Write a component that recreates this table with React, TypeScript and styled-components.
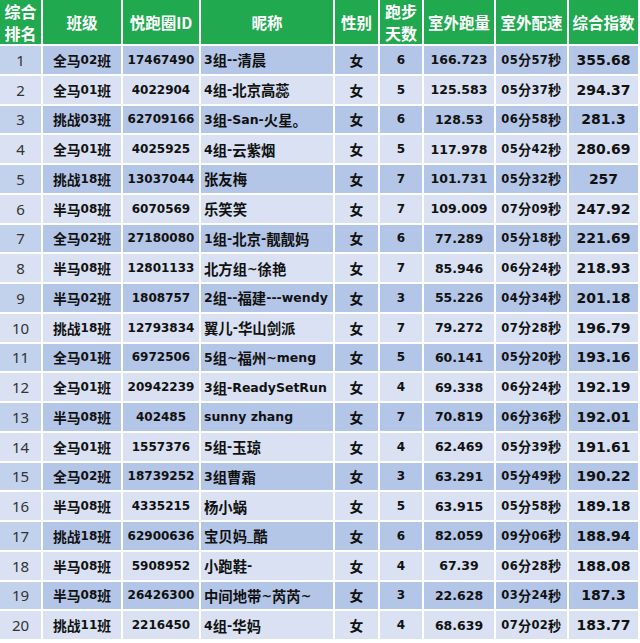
import styled, { createGlobalStyle } from "styled-components";

type Record = {
  rank: number;
  team: string;
  id: string;
  nick: string;
  gender: string;
  days: number;
  distance: string;
  pace: string;
  score: string;
};

const rows: Record[] = [
  { rank: 1, team: "全马02班", id: "17467490", nick: "3组--清晨", gender: "女", days: 6, distance: "166.723", pace: "05分57秒", score: "355.68" },
  { rank: 2, team: "全马01班", id: "4022904", nick: "4组-北京高蕊", gender: "女", days: 5, distance: "125.583", pace: "05分37秒", score: "294.37" },
  { rank: 3, team: "挑战03班", id: "62709166", nick: "3组-San-火星。", gender: "女", days: 6, distance: "128.53", pace: "06分58秒", score: "281.3" },
  { rank: 4, team: "全马01班", id: "4025925", nick: "4组-云紫烟", gender: "女", days: 5, distance: "117.978", pace: "05分42秒", score: "280.69" },
  { rank: 5, team: "挑战18班", id: "13037044", nick: "张友梅", gender: "女", days: 7, distance: "101.731", pace: "05分32秒", score: "257" },
  { rank: 6, team: "半马08班", id: "6070569", nick: "乐笑笑", gender: "女", days: 7, distance: "109.009", pace: "07分09秒", score: "247.92" },
  { rank: 7, team: "全马02班", id: "27180080", nick: "1组-北京-靓靓妈", gender: "女", days: 6, distance: "77.289", pace: "05分18秒", score: "221.69" },
  { rank: 8, team: "半马08班", id: "12801133", nick: "北方组~ 徐艳", gender: "女", days: 7, distance: "85.946", pace: "06分24秒", score: "218.93" },
  { rank: 9, team: "半马02班", id: "1808757", nick: "2组--福建---wendy", gender: "女", days: 3, distance: "55.226", pace: "04分34秒", score: "201.18" },
  { rank: 10, team: "挑战18班", id: "12793834", nick: "翼儿-华山剑派", gender: "女", days: 7, distance: "79.272", pace: "07分28秒", score: "196.79" },
  { rank: 11, team: "全马01班", id: "6972506", nick: "5组~福州~meng", gender: "女", days: 5, distance: "60.141", pace: "05分20秒", score: "193.16" },
  { rank: 12, team: "全马01班", id: "20942239", nick: "3组-ReadySetRun", gender: "女", days: 4, distance: "69.338", pace: "06分24秒", score: "192.19" },
  { rank: 13, team: "半马08班", id: "402485", nick: "sunny zhang", gender: "女", days: 7, distance: "70.819", pace: "06分36秒", score: "192.01" },
  { rank: 14, team: "全马01班", id: "1557376", nick: "5组-玉琼", gender: "女", days: 4, distance: "62.469", pace: "05分39秒", score: "191.61" },
  { rank: 15, team: "全马02班", id: "18739252", nick: "3组曹霜", gender: "女", days: 3, distance: "63.291", pace: "05分49秒", score: "190.22" },
  { rank: 16, team: "半马08班", id: "4335215", nick: "杨小蜗", gender: "女", days: 5, distance: "63.915", pace: "05分58秒", score: "189.18" },
  { rank: 17, team: "挑战18班", id: "62900636", nick: "宝贝妈_酷", gender: "女", days: 6, distance: "82.059", pace: "09分06秒", score: "188.94" },
  { rank: 18, team: "半马08班", id: "5908952", nick: "小跑鞋-", gender: "女", days: 4, distance: "67.39", pace: "06分28秒", score: "188.08" },
  { rank: 19, team: "半马08班", id: "26426300", nick: "中间地带~芮芮~", gender: "女", days: 3, distance: "22.628", pace: "03分24秒", score: "187.3" },
  { rank: 20, team: "挑战11班", id: "2216450", nick: "4组-华妈", gender: "女", days: 4, distance: "68.639", pace: "07分02秒", score: "183.77" },
];

const GlobalStyle = createGlobalStyle`
  html, body {
    margin: 0;
    padding: 0;
    background: #ffffff;
  }
  body {
    font-family: "DejaVu Sans", "Noto Sans CJK SC", sans-serif;
  }
`;

// Chinese runs are set a bit larger than the Latin/digit runs, as in the sheet
function Mixed({ text }: { text: string }) {
  const parts = text.split(/([\u3000-\u9fff\uff00-\uffef]+)/);
  return (
    <>
      {parts.map((p, i) =>
        i % 2 === 1 ? <Han key={i}>{p}</Han> : p ? <span key={i}>{p}</span> : null
      )}
    </>
  );
}

export default function App() {
  return (
    <>
      <GlobalStyle />
      <Table>
        <HeaderRow>
          <HeadCell $twoLine>综合<br />排名</HeadCell>
          <HeadCell>班级</HeadCell>
          <HeadCell>悦跑圈ID</HeadCell>
          <HeadCell>昵称</HeadCell>
          <HeadCell>性别</HeadCell>
          <HeadCell $twoLine>跑步<br />天数</HeadCell>
          <HeadCell>室外跑量</HeadCell>
          <HeadCell>室外配速</HeadCell>
          <HeadCell>综合指数</HeadCell>
        </HeaderRow>
        {rows.map((r) => {
          const odd = r.rank % 2 === 1;
          return (
            <Row key={r.rank}>
              <RankCell $odd={odd}>{r.rank}</RankCell>
              <Cell $odd={odd}><Mixed text={r.team} /></Cell>
              <Cell $odd={odd}>{r.id}</Cell>
              <NickCell $odd={odd}><Mixed text={r.nick} /></NickCell>
              <Cell $odd={odd}><Mixed text={r.gender} /></Cell>
              <Cell $odd={odd}>{r.days}</Cell>
              <Cell $odd={odd} $size={12.5}>{r.distance}</Cell>
              <PaceCell $odd={odd}><Mixed text={r.pace} /></PaceCell>
              <Cell $odd={odd} $size={14}>{r.score}</Cell>
            </Row>
          );
        })}
      </Table>
    </>
  );
}

const columns = "41px 78px 76px 132px 43px 42px 70px 71px 69px";

const Table = styled.div`
  width: 638px;
  display: flex;
  flex-direction: column;
  gap: 2px;
  background: #ffffff;
`;

const HeaderRow = styled.div`
  display: grid;
  grid-template-columns: ${columns};
  column-gap: 2px;
  height: 44px;
`;

const HeadCell = styled.div<{ $twoLine?: boolean }>`
  background: #20a94f;
  color: #ffffff;
  font-family: "Noto Sans CJK SC", sans-serif;
  font-weight: 700;
  font-size: ${(p) => (p.$twoLine ? "16px" : "15.5px")};
  line-height: 22px;
  display: flex;
  align-items: center;
  justify-content: center;
  text-align: center;
  white-space: nowrap;
`;

const Row = styled.div`
  display: grid;
  grid-template-columns: ${columns};
  column-gap: 2px;
  height: 27.75px;
`;

const Cell = styled.div<{ $odd: boolean; $size?: number }>`
  background: ${(p) => (p.$odd ? "#b4c6e7" : "#d9e1f2")};
  color: #111111;
  font-weight: 700;
  font-size: ${(p) => p.$size ?? 12}px;
  display: flex;
  align-items: center;
  justify-content: center;
  white-space: nowrap;
  overflow: hidden;
`;

const Han = styled.span`
  font-family: "Noto Sans CJK SC", sans-serif;
  font-size: 1.15em;
`;

const RankCell = styled(Cell)`
  background: ${(p) => (p.$odd ? "#c2d1ec" : "#d9e1f2")};
  font-family: "Noto Sans", sans-serif;
  font-weight: 400;
  font-size: 15px;
  color: #333333;
`;

const NickCell = styled(Cell)`
  justify-content: flex-start;
  padding-left: 3px;
  font-size: 12.5px;
`;

const PaceCell = styled(Cell)`
  font-size: 11.5px;
  letter-spacing: 0.3px;
`;
